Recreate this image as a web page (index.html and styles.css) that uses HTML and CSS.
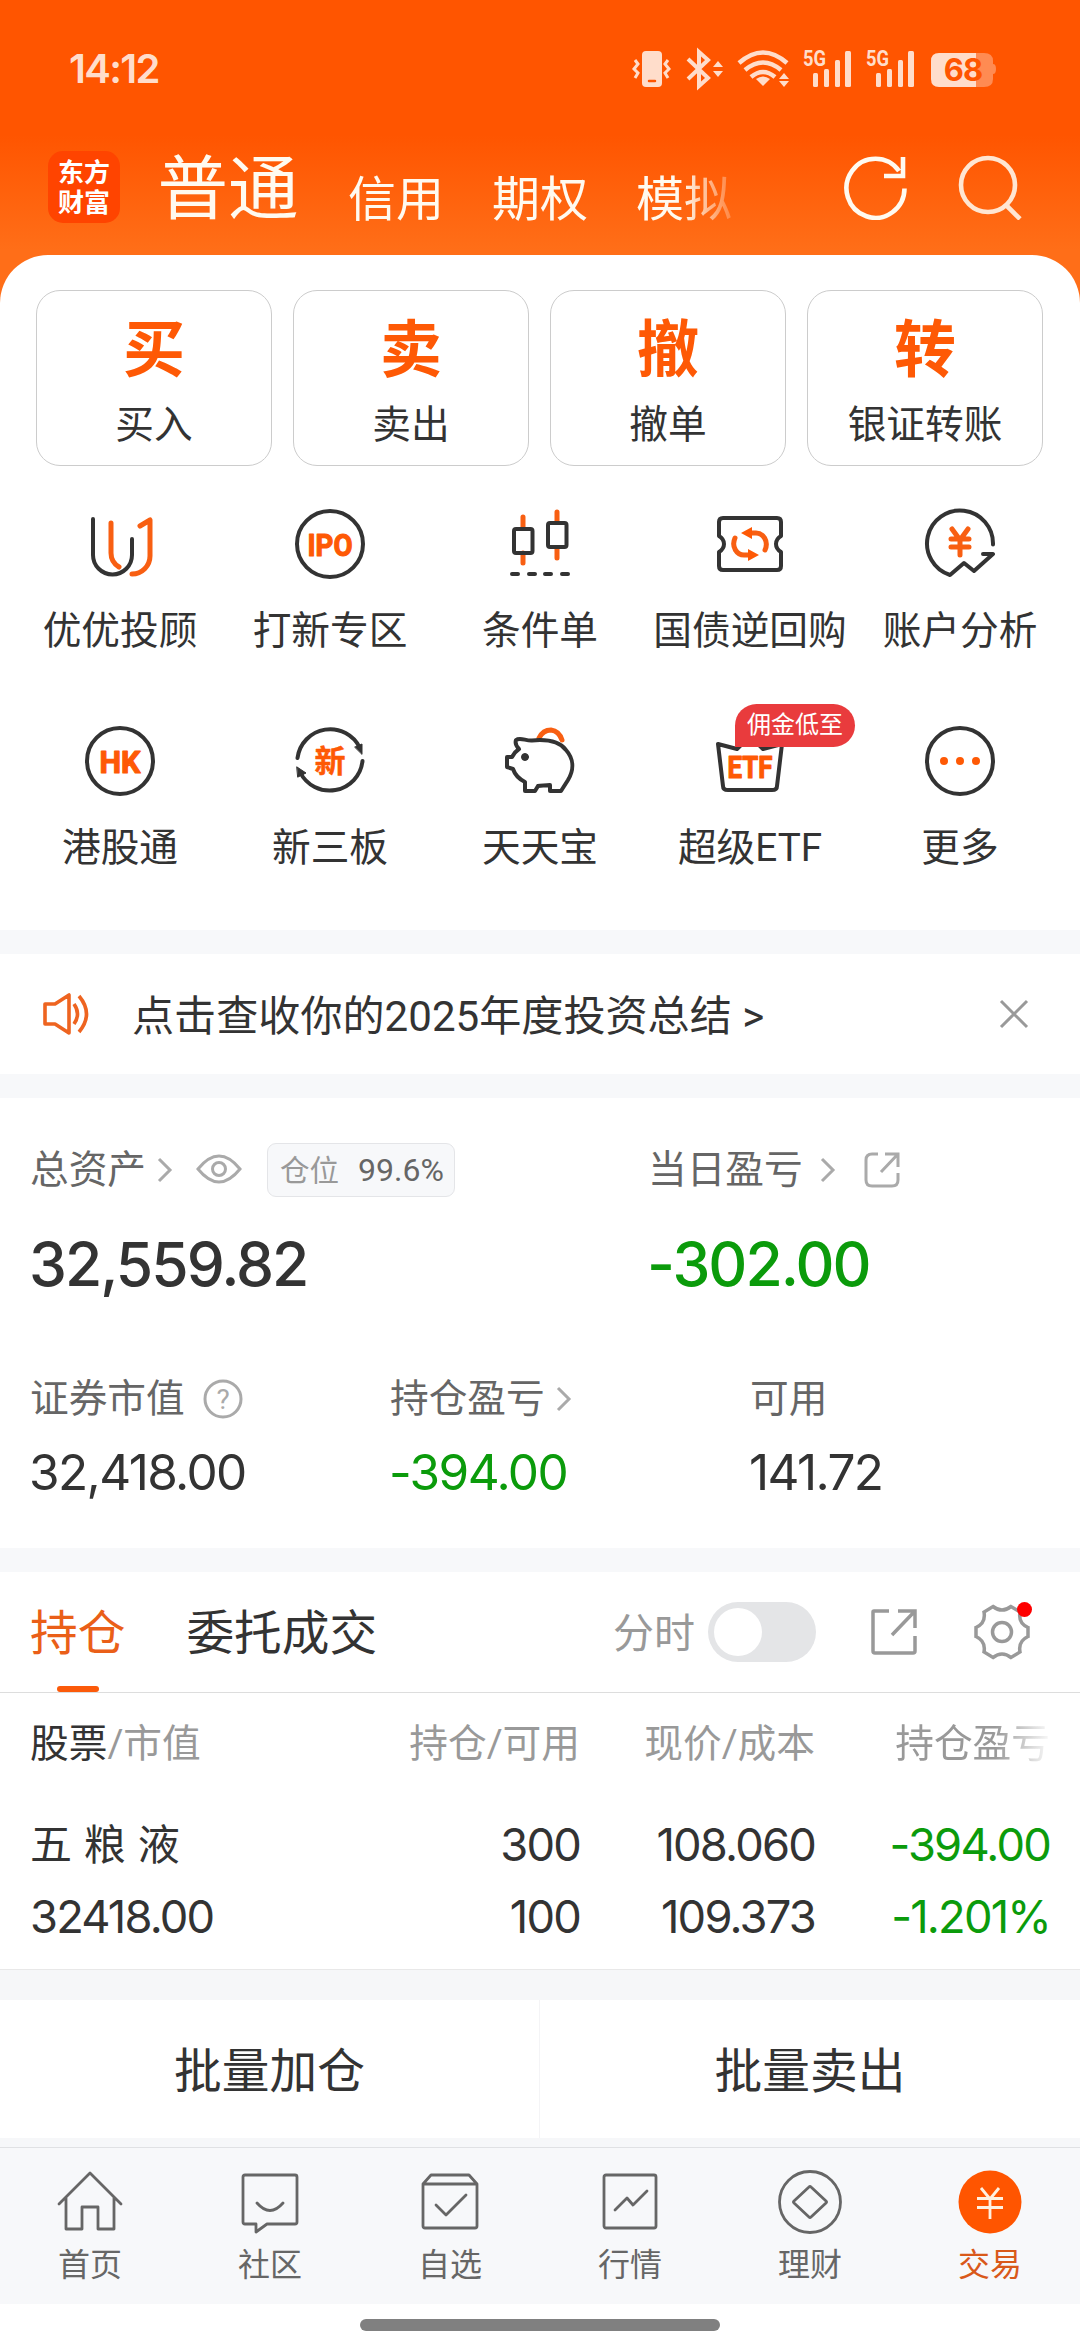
FILE: index.html
```html
<!DOCTYPE html>
<html lang="zh-CN">
<head>
    <meta charset="UTF-8">
    <meta name="viewport" content="width=device-width, initial-scale=1.0">
    <title>交易</title>
    <link rel="stylesheet" href="styles.css">
</head>
<body>
    <header>
        <!-- Status bar -->
        <div class="status-bar">
            <span class="time">14:12</span>
            <svg class="status-icons" width="366" height="44" viewBox="0 0 366 44">
                <g fill="#ffddcb">
                    <rect x="11" y="4" width="20" height="36" rx="4"/>
                    <path d="M87 14l5 6H82zM87 30l5-6H82z"/>
                    <path d="M132 39l-7-7q7-5 14 0z"/>
                    <path d="M153 26l5 6h-10zM153 40l5-6h-10z"/>
                    <rect x="182" y="26" width="5" height="14" rx="1.5"/>
                    <rect x="193" y="22" width="5" height="18" rx="1.5"/>
                    <rect x="204" y="13" width="5" height="27" rx="1.5"/>
                    <rect x="214" y="4" width="6" height="36" rx="1.5"/>
                    <rect x="245" y="26" width="5" height="14" rx="1.5"/>
                    <rect x="256" y="22" width="5" height="18" rx="1.5"/>
                    <rect x="267" y="13" width="5" height="27" rx="1.5"/>
                    <rect x="277" y="4" width="6" height="36" rx="1.5"/>
                    <path d="M308 6h37v34h-37q-8 0-8-8V14q0-8 8-8z"/>
                </g>
                <g fill="none" stroke="#ffddcb" stroke-width="3">
                    <path d="M4 13l3 4-4 5 4 4-3 5M37 13l-3 4 4 5-4 4 3 5"/>
                    <path d="M57 12l20 19-9 8V5l9 8-20 19" stroke-width="4"/>
                    <path d="M108 16q24-21 48 0M114 23q18-15 36 0M120 30q12-10 24 0" stroke-width="4.5"/>
                </g>
                <path d="M345 6h8q9 0 9 8v3q3 0 3 5t-3 5v5q0 8-9 8h-8z" fill="#ff8b52"/>
                <path d="M18 34h6" stroke="#ff5500" stroke-width="2.5" stroke-linecap="round"/>
                <text class="net" x="172" y="19" textLength="23" lengthAdjust="spacingAndGlyphs">5G</text>
                <text class="net" x="235" y="19" textLength="23" lengthAdjust="spacingAndGlyphs">5G</text>
                <text class="level" x="332" y="34">68</text>
            </svg>
        </div>

        <!-- Account switcher -->
        <div class="account-bar">
            <div class="logo">东方<br>财富</div>
            <div class="accounts">
                <a class="current">普通</a>
                <a>信用</a>
                <a>期权</a>
                <a>模拟</a>
            </div>
            <svg width="64" height="66" viewBox="0 0 64 66" fill="none" stroke="#fffaf0" stroke-width="4.6">
                <path d="M60.500 34.500A29 29.500 0 1 1 55 17M59 3v19H40"/>
            </svg>
            <svg width="66" height="66" viewBox="0 0 66 66" fill="none" stroke="#ffe6d2" stroke-width="4.600">
                <circle cx="30" cy="31" r="27"/>
                <path d="M48 51l14 14"/>
            </svg>
        </div>
    </header>

    <main>
        <section class="entry">
            <div class="cards">
                <div class="card"><b>买</b><span>买入</span></div>
                <div class="card"><b>卖</b><span>卖出</span></div>
                <div class="card"><b>撤</b><span>撤单</span></div>
                <div class="card"><b>转</b><span>银证转账</span></div>
            </div>

            <div class="tools">
                <div class="tool">
                    <svg viewBox="0 0 72 72">
                        <path d="M9 11v36a19.500 19.500 0 0 0 39 0V31"/>
                        <path class="o" d="M27 15v30c0 7 3 11 8 14M56 18l10-6v36a18 18 0 0 1-18 18"/>
                    </svg>
                    <span>优优投顾</span>
                </div>
                <div class="tool">
                    <svg viewBox="0 0 72 72">
                        <circle cx="36" cy="36" r="33"/>
                        <text x="36" y="47.500" textLength="45" lengthAdjust="spacingAndGlyphs">IPO</text>
                    </svg>
                    <span>打新专区</span>
                </div>
                <div class="tool">
                    <svg viewBox="0 0 72 72">
                        <path class="o" d="M19 9v11M19 45v10M53 4v10M53 40v10"/>
                        <rect x="10" y="21" width="18.500" height="24" rx="2"/>
                        <rect x="44" y="15" width="18.500" height="24" rx="2"/>
                        <path d="M8 66h6M25 66h6M41 66h6M58 66h6"/>
                    </svg>
                    <span>条件单</span>
                </div>
                <div class="tool">
                    <svg viewBox="0 0 72 72">
                        <path d="M9 10h54q4 0 4 4v14q-5 3-5 8t5 8v14q0 4-4 4H9q-4 0-4-4V44q5-3 5-8t-5-8V14q0-4 4-4z"/>
                        <path class="o" d="M51 42c4-9-2-17-9-17h-7M21 30c-4 9 2 17 9 17h7"/>
                        <path class="of" d="M27 25l11-6v12zM45 47l-11-6v12z"/>
                    </svg>
                    <span>国债逆回购</span>
                </div>
                <div class="tool">
                    <svg viewBox="0 0 72 72">
                        <path d="M69 36.500A33 33 0 1 0 26 67l14-12 10 8 19-17H59"/>
                        <path class="o" d="M28 21l8 11 8-11M27 31h18M27 39h18M36 32v15"/>
                    </svg>
                    <span>账户分析</span>
                </div>
                <div class="tool">
                    <svg viewBox="0 0 72 72">
                        <circle cx="36" cy="36" r="33"/>
                        <text x="36" y="47.500" textLength="41" lengthAdjust="spacingAndGlyphs">HK</text>
                    </svg>
                    <span>港股通</span>
                </div>
                <div class="tool">
                    <svg viewBox="0 0 72 72">
                        <path d="M3.500 33A33 33 0 0 1 66 23M68.500 36A33 33 0 0 1 6 47"/>
                        <path class="df" d="M61 22l7-3v10zM3 42l9 6-8 4z"/>
                        <text class="xin" x="36" y="47">新</text>
                    </svg>
                    <span>新三板</span>
                </div>
                <div class="tool">
                    <svg viewBox="0 0 72 72">
                        <path class="o" d="M35 13q4-8 12-8 8 1 11 10"/>
                        <path class="wf" d="M12 15c4-3 10 1 16 .5C44 14 56 17 62 25c8 9 8 20 2 30l-7 11H46v-6c-5 1-9 0-12 1l-3 5H21v-9c-6-3-10-7-12-13l-6-2V32h5c2-4 4-6 7-8-3-3-4-6-3-9z"/>
                        <circle class="df" cx="21" cy="32" r="3.500"/>
                    </svg>
                    <span>天天宝</span>
                </div>
                <div class="tool">
                    <svg viewBox="0 0 72 72">
                        <path d="M4 19l19 5 13-13 13 13 19-5-5 42q0 4-5 4H14q-5 0-5-4z"/>
                        <text x="36" y="53" textLength="45" lengthAdjust="spacingAndGlyphs">ETF</text>
                    </svg>
                    <span>超级ETF</span>
                    <i class="badge">佣金低至</i>
                </div>
                <div class="tool">
                    <svg viewBox="0 0 72 72">
                        <circle cx="36" cy="36" r="33"/>
                        <path class="of" d="M16 36a4 4 0 1 0 8 0a4 4 0 1 0-8 0M32 36a4 4 0 1 0 8 0a4 4 0 1 0-8 0M48 36a4 4 0 1 0 8 0a4 4 0 1 0-8 0"/>
                    </svg>
                    <span>更多</span>
                </div>
            </div>
        </section>

        <!-- Notice -->
        <section class="notice">
            <svg width="50" height="44" viewBox="0 0 50 44" fill="none" stroke="#ee6420" stroke-width="3.600" stroke-linejoin="round">
                <path d="M4 12h10L28 3v38L14 32H4zM33 12q7 10 0 20M38 4q15 18 0 36"/>
            </svg>
            <p>点击查收你的2025年度投资总结 &gt;</p>
            <svg width="30" height="30" viewBox="0 0 30 30" stroke="#999" stroke-width="3">
                <path d="M2 2l26 26M28 2L2 28"/>
            </svg>
        </section>

        <!-- Assets -->
        <section class="assets">
            <div class="total">
                <div class="label">
                    <span>总资产</span>
                    <svg class="chevron" viewBox="0 0 16 26"><path d="M2 2l11 11L2 24"/></svg>
                    <svg class="eye" viewBox="0 0 46 32"><path d="M2 15q21-26 42 0-21 26-42 0z"/><circle cx="23" cy="15" r="6.500"/></svg>
                    <span class="ratio"><em>仓位</em>99.6%</span>
                </div>
                <div class="big">32,559.82</div>
            </div>
            <div class="today">
                <div class="label">
                    <span>当日盈亏</span>
                    <svg class="chevron" viewBox="0 0 16 26"><path d="M2 2l11 11L2 24"/></svg>
                    <svg class="share" viewBox="0 0 36 36"><path d="M14 2H8Q2 2 2 8v20q0 6 6 6h20q6 0 6-6V21M21 2h13v13M34 2L17 20"/></svg>
                </div>
                <div class="big down">-302.00</div>
            </div>
            <div class="item">
                <div class="label">
                    <span>证券市值</span>
                    <svg class="help" viewBox="0 0 40 40"><circle cx="20" cy="20" r="18"/><text x="20" y="30">?</text></svg>
                </div>
                <div class="num">32,418.00</div>
            </div>
            <div class="item">
                <div class="label">
                    <span>持仓盈亏</span>
                    <svg class="chevron" viewBox="0 0 16 26"><path d="M2 2l11 11L2 24"/></svg>
                </div>
                <div class="num down">-394.00</div>
            </div>
            <div class="item">
                <div class="label"><span>可用</span></div>
                <div class="num">141.72</div>
            </div>
        </section>

        <!-- Positions -->
        <section class="positions">
            <div class="tabs">
                <a class="tab active">持仓</a>
                <a class="tab">委托成交</a>
                <span class="minute">分时</span>
                <span class="switch"></span>
                <svg class="open" viewBox="0 0 48 48"><path d="M19 3H4q-1 0-1 1v39q0 2 2 2h38q2 0 2-2V28M28 3h17v17M45 3L22 27"/></svg>
                <span class="settings">
                    <svg viewBox="0 0 56 56"><path d="M19 2.500Q28 9.500 37 2.500L46 8Q44 19 54 23.500V32.500Q44 37 46 48L37 53.500Q28 46.500 19 53.500L10 48Q12 37 2 32.500V23.500Q12 19 10 8Z"/><circle cx="28" cy="28" r="9.500"/></svg>
                    <i class="dot"></i>
                </span>
            </div>
            <div class="row head">
                <span><b>股票</b>/市值</span>
                <span>持仓/可用</span>
                <span>现价/成本</span>
                <span class="fade">持仓盈亏</span>
            </div>
            <div class="row">
                <span class="name">五 粮 液</span>
                <span>300</span>
                <span>108.060</span>
                <span class="down">-394.00</span>
            </div>
            <div class="row">
                <span>32418.00</span>
                <span>100</span>
                <span>109.373</span>
                <span class="down">-1.201%</span>
            </div>
        </section>

        <section class="batch">
            <a>批量加仓</a>
            <a>批量卖出</a>
        </section>
    </main>

    <!-- Bottom navigation -->
    <nav>
        <a>
            <svg viewBox="0 0 66 66"><path d="M2 34L33 3l31 31M9 28v31h16V37h16v22h16V28"/></svg>
            <span>首页</span>
        </a>
        <a>
            <svg viewBox="0 0 66 66"><path d="M8 5h50q2 0 2 2v45q0 2-2 2H30l-11 8v-8H8q-2 0-2-2V7q0-2 2-2zM20 33q13 15 26 0"/></svg>
            <span>社区</span>
        </a>
        <a>
            <svg viewBox="0 0 66 66"><path d="M6 14l8-9h38l8 9v42q0 2-2 2H8q-2 0-2-2zM6 14h54M19 35l10 10 20-20"/></svg>
            <span>自选</span>
        </a>
        <a>
            <svg viewBox="0 0 66 66"><rect x="7" y="5" width="52" height="53" rx="2"/><path d="M18 40l12-12 6 7 14-14"/></svg>
            <span>行情</span>
        </a>
        <a>
            <svg viewBox="0 0 66 66"><circle cx="33" cy="32" r="30.500"/><path d="M32 17q1-1 2 0l15 14q1 1 0 2L34 47q-1 1-2 0L17 33q-1-1 0-2z"/></svg>
            <span>理财</span>
        </a>
        <a class="on">
            <svg viewBox="0 0 66 66"><circle cx="33" cy="32" r="31.500"/><path d="M24 18l9 11 9-11M20 28.500h26M20 37.500h26M33 29v20"/></svg>
            <span>交易</span>
        </a>
    </nav>
    <div class="home-bar"></div>
</body>
</html>
```
FILE: styles.css
```css
* {
    margin: 0;
    padding: 0;
    box-sizing: border-box;
}

body {
    width: 1080px;
    height: 2352px;
    overflow: hidden;
    background-color: #fff;
    color: #333;
    font-family: Roboto, "Noto Sans CJK SC", sans-serif;
    font-size: 38.7px;
}

svg {
    display: block;
    flex-shrink: 0;
}

i, em {
    font-style: normal;
}

/* Header */
header {
    height: 303px;
    background: linear-gradient(#ff5500 0, #ff5500 135px, #ff6e18 250px);
}

.status-bar {
    display: flex;
    justify-content: space-between;
    height: 135px;
    padding: 47px 83px 0 69px;
}

.time {
    font-family: Inter, sans-serif;
    font-size: 40px;
    font-weight: 600;
    line-height: 44px;
    letter-spacing: -1.7px;
    color: #ffddcb;
}

.net {
    font-size: 22px;
    font-weight: 700;
    fill: #ffddcb;
}

.level {
    font-family: Inter, sans-serif;
    font-size: 31px;
    font-weight: 700;
    letter-spacing: -1px;
    text-anchor: middle;
    fill: #ff5500;
}

.account-bar {
    display: flex;
    padding-left: 48px;
}

.logo {
    width: 72px;
    height: 72px;
    margin-top: 16px;
    padding-top: 7px;
    border-radius: 15px;
    background-color: #ff4400;
    color: #fff;
    font-size: 26px;
    font-weight: 700;
    line-height: 30px;
    text-align: center;
}

.accounts {
    display: flex;
    gap: 48px;
    width: 600px;
    margin: 0 auto 0 36px;
    color: #fffaf0;
    font-size: 48px;
    line-height: 72px;
    padding-top: 29px;
    mask-image: linear-gradient(90deg, #000 525px, transparent 590px);
}

.accounts .current {
    width: 144px;
    font-size: 70.5px;
    margin-top: -10px;
    text-align: center;
}

.account-bar svg {
    margin-top: 19px;
}

.account-bar svg:last-child {
    margin: 19px 56px 0 50px;
}

/* Trade entry */
.entry {
    height: 675px;
    margin-top: -48px;
    padding: 35px 36px 0;
    border-radius: 48px 48px 0 0;
    background-color: #fff;
}

.cards {
    display: grid;
    grid-template-columns: repeat(4, 236px);
    gap: 21px;
}

.card {
    display: flex;
    flex-direction: column;
    align-items: center;
    height: 176px;
    padding-top: 23px;
    border: 1px solid #ccc;
    border-radius: 24px;
}

.card b {
    color: #fe5905;
    font-size: 62px;
    line-height: 74px;
}

.card span {
    margin-top: 12px;
    line-height: 50px;
}

.tools {
    display: grid;
    grid-template-columns: repeat(5, 210px);
    grid-auto-rows: 217px;
    margin: 42px -21px 0;
}

.tool {
    position: relative;
    display: flex;
    flex-direction: column;
    align-items: center;
    white-space: nowrap;
}

.tool svg {
    width: 72px;
    height: 72px;
    fill: none;
    stroke: #333;
    stroke-width: 4;
    stroke-linecap: round;
    stroke-linejoin: round;
}

.tool span {
    margin-top: 26px;
    line-height: 50px;
}

.tool svg .o {
    stroke: #f85f12;
    stroke-width: 5;
}

.tool svg .of {
    fill: #fe5905;
    stroke: none;
}

.tool svg .df {
    fill: #333;
    stroke: #333;
    stroke-width: 1;
}

.tool svg .wf {
    fill: #fff;
}

.tool text {
    fill: #fe5905;
    stroke: #fe5905;
    stroke-width: 1.2;
    font-size: 32px;
    font-weight: 700;
    text-anchor: middle;
}

.tool .xin {
    font-size: 31px;
    stroke-width: .5;
}

.badge {
    position: absolute;
    left: 90px;
    top: -21px;
    width: 120px;
    height: 43px;
    border-radius: 22px 22px 22px 0;
    background-color: #e93b3d;
    color: #fff;
    font-size: 24px;
    line-height: 43px;
    text-align: center;
}

/* Notice */
.notice {
    display: flex;
    align-items: center;
    height: 168px;
    padding: 0 51px 0 41px;
    border-top: 24px solid #f7f8fa;
    border-bottom: 24px solid #f7f8fa;
}

.notice p {
    flex: 1;
    padding: 0 0 4px 41px;
    font-size: 42.1px;
}

/* Assets */
.assets {
    display: grid;
    grid-template-columns: repeat(35, 30px);
    grid-template-rows: 229px 1fr;
    height: 450px;
    padding: 36px 0 0 30px;
}

.total {
    grid-column: span 20;
}

.today {
    grid-column: 21 / span 15;
    padding-left: 18px;
}

.item {
    grid-column: span 12;
}

.item:last-child {
    grid-column: span 11;
}

.label {
    display: flex;
    align-items: center;
    height: 72px;
    color: #666;
}

.label > span:first-child {
    line-height: 50px;
}

.label svg {
    fill: none;
    stroke: #aaa;
    stroke-width: 3;
}

.chevron {
    width: 16px;
    height: 26px;
    margin-left: 11px;
}

.today .chevron {
    margin-left: 17px;
}

.eye {
    width: 46px;
    height: 32px;
    margin-left: 23px;
}

.share {
    width: 36px;
    height: 36px;
    margin-left: 28px;
}

.help {
    width: 40px;
    height: 40px;
    margin-left: 18px;
}

.help text {
    fill: #aaa;
    stroke: none;
    font-size: 28px;
    text-anchor: middle;
}

.ratio {
    height: 54px;
    margin-left: 25px;
    padding: 0 10px 0 12px;
    border: 1px solid #e4e5e8;
    border-radius: 9px;
    background-color: #f7f8fa;
    font-size: 32px;
    line-height: 52px;
}

.ratio em {
    margin-right: 19px;
    color: #999;
    font-size: 29.5px;
}

.big {
    margin: 22px 0 0 -1px;
    font-family: Inter, sans-serif;
    font-size: 60.5px;
    font-weight: 500;
    line-height: 72px;
    letter-spacing: -2px;
}

.item .label {
    height: 72px;
}

.num {
    margin: 7px 0 0 -1px;
    font-family: Inter, sans-serif;
    font-size: 49.5px;
    line-height: 60px;
    letter-spacing: -1.6px;
}

.down {
    color: #0b9b0b;
}

/* Positions */
.positions {
    height: 422px;
    border-top: 24px solid #f7f8fa;
    border-bottom: 1px solid #e8e8e8;
}

.tabs {
    display: flex;
    align-items: center;
    height: 121px;
    padding: 0 50px 0 30px;
    border-bottom: 1px solid #ddd;
}

.tab {
    position: relative;
    height: 120px;
    margin-right: 61px;
    font-size: 47.7px;
    line-height: 125px;
}

.tab.active {
    color: #ea5f18;
}

.tab.active::after {
    content: "";
    position: absolute;
    left: 27px;
    bottom: 0;
    width: 42px;
    height: 6px;
    border-radius: 3px;
    background-color: #fb5a0a;
}

.minute {
    margin-left: auto;
    padding-top: 3px;
    color: #999;
    font-size: 41px;
    line-height: 60px;
}

.switch {
    width: 108px;
    height: 60px;
    margin-left: 13px;
    padding: 6px;
    border-radius: 30px;
    background-color: #e4e5e7;
}

.switch::before {
    content: "";
    display: block;
    width: 48px;
    height: 48px;
    border-radius: 50%;
    background-color: #fff;
}

.tabs svg {
    fill: none;
    stroke: #999;
    stroke-width: 3.500;
}

.open {
    width: 48px;
    height: 48px;
    margin-left: 54px;
}

.settings {
    position: relative;
    margin-left: 56px;
}

.settings svg {
    width: 56px;
    height: 56px;
}

.dot {
    position: absolute;
    right: -2px;
    top: -2px;
    width: 15px;
    height: 15px;
    border-radius: 50%;
    background-color: #fe0000;
}

.row {
    display: grid;
    grid-template-columns: 320px 230px 235px 235px;
    height: 72px;
    padding: 0 30px;
    font-family: Inter, "Noto Sans CJK SC", sans-serif;
    font-size: 45.3px;
    line-height: 72px;
    letter-spacing: -1.8px;
    text-align: right;
}

.row span:first-child {
    text-align: left;
}

.row .name {
    font-size: 42px;
    letter-spacing: 0;
}

.row.head {
    height: 116px;
    color: #999;
    font-family: Roboto, "Noto Sans CJK SC", sans-serif;
    font-size: 38.7px;
    line-height: 101px;
    letter-spacing: 0;
}

.head b {
    color: #333;
    font-weight: 400;
}

.head .fade {
    mask-image: linear-gradient(90deg, #000 180px, transparent 238px);
}

/* Batch buttons */
.batch {
    display: grid;
    grid-template-columns: 539px 541px;
    height: 177px;
    border-top: 30px solid #f6f7f9;
    border-bottom: 9px solid #f6f7f9;
    font-size: 47.7px;
    line-height: 144px;
    text-align: center;
}

.batch a {
    height: 138px;
}

.batch a + a {
    border-left: 1px solid #f4f4f6;
}

/* Bottom navigation */
nav {
    display: grid;
    grid-template-columns: repeat(6, 1fr);
    height: 157px;
    border-top: 1px solid #e0e1e4;
    background-color: #f7f8fa;
}

nav a {
    display: flex;
    flex-direction: column;
    align-items: center;
    padding-top: 22px;
    color: #666;
    font-size: 32px;
    line-height: 40px;
}

nav svg {
    width: 66px;
    height: 66px;
    margin-bottom: 9px;
    fill: none;
    stroke: #666;
    stroke-width: 2.800;
    stroke-linecap: round;
    stroke-linejoin: round;
}

nav .on {
    color: #d9591a;
}

nav .on svg {
    stroke: #fff0e0;
    stroke-linecap: butt;
}

nav .on circle {
    fill: #ff5500;
    stroke: none;
}

.home-bar {
    width: 360px;
    height: 12px;
    margin: 15px auto 0;
    border-radius: 6px;
    background-color: #808080;
}
```
